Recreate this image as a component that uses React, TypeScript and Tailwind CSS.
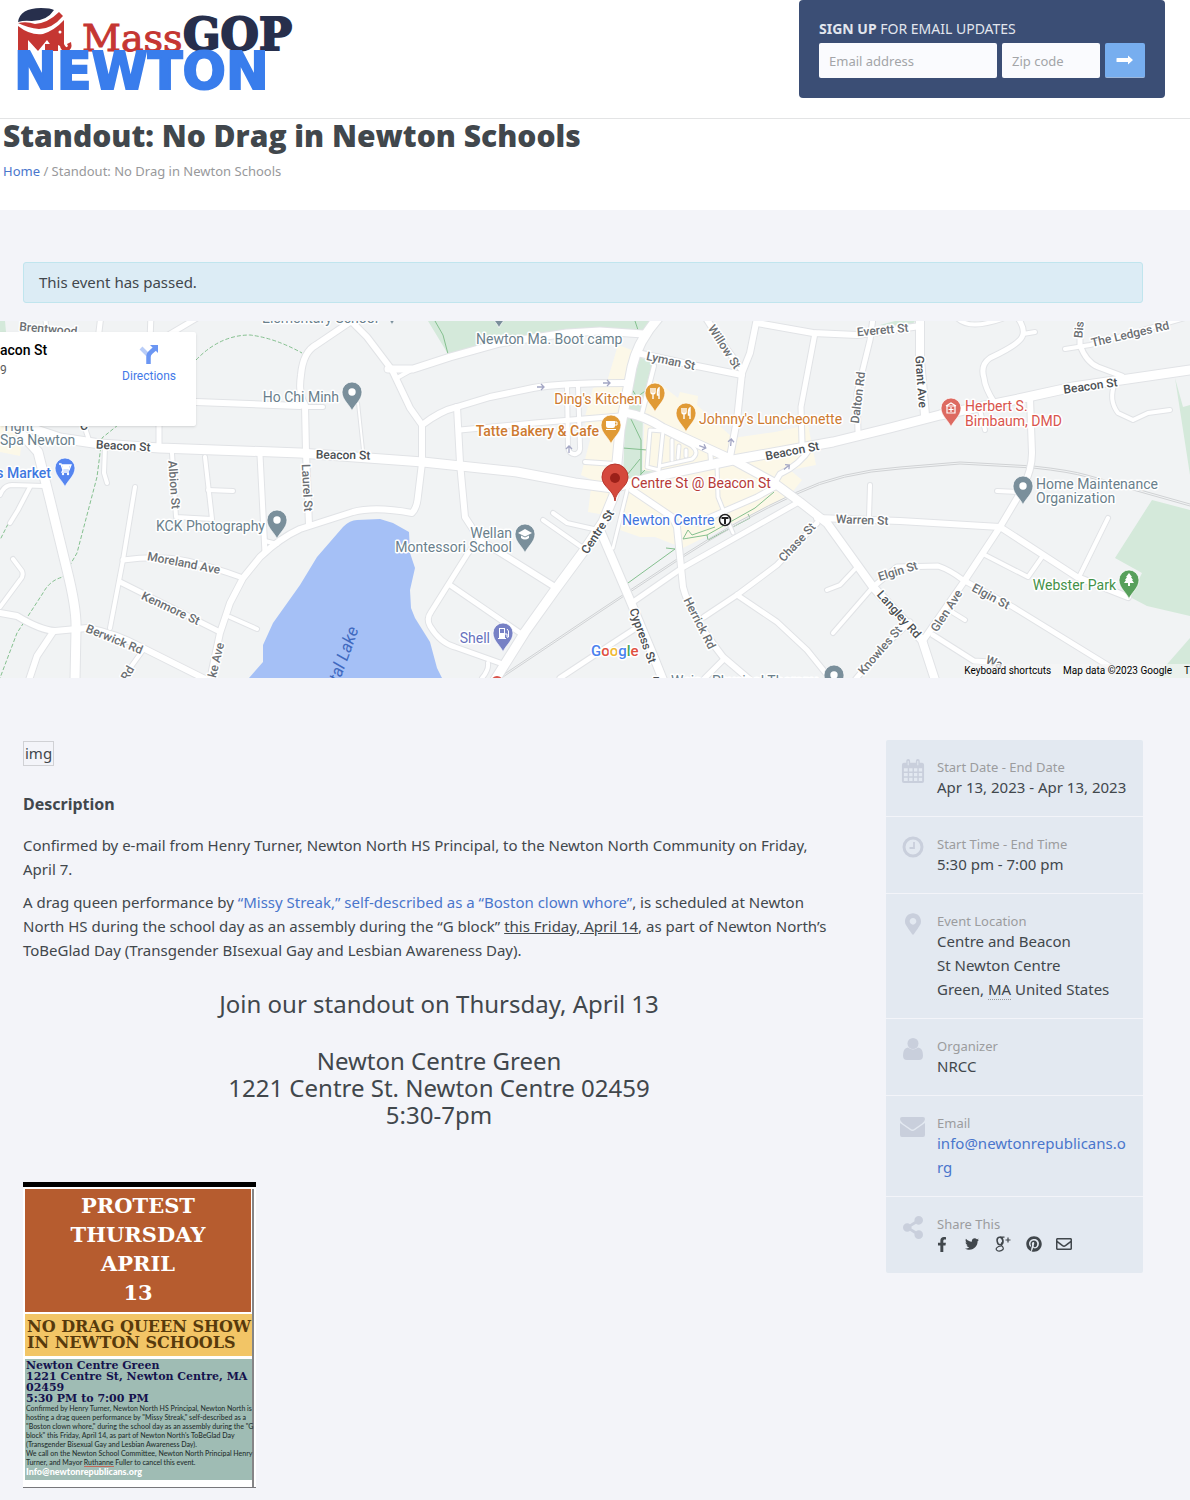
import React, { useState } from "react";
import {
  FaFacebookF,
  FaMapMarkerAlt,
  FaPinterest,
  FaRegEnvelope,
  FaShareAlt,
  FaTwitter,
} from "react-icons/fa";

/* ---------- Map data ---------- */

interface Road {
  d: string;
  w: number;
}

const roads: Road[] = [
  // minor streets
  { d: "M358 403L363 450", w: 2 },
  { d: "M628 487L613 548", w: 3 },
  { d: "M717 465L718 497L724 512L733 533", w: 3 },
  { d: "M0 495Q4 485 12 485L44 486", w: 4 },
  { d: "M30 487L18 510L10 523", w: 4 },
  { d: "M13 559L22 571Q24 576 20 580L0 607", w: 4 },
  { d: "M135 487L123 560L110 628", w: 4 },
  { d: "M123 560Q160 555 187 561Q210 566 243 578", w: 5 },
  { d: "M120 582L220 632", w: 5 },
  { d: "M105 447L104 473L107 483", w: 4 },
  { d: "M172 453L176 517L212 519L205 457", w: 4 },
  { d: "M208 490L233 491", w: 4 },
  { d: "M260 455L265 553", w: 5 },
  { d: "M265 541L277 544", w: 4 },
  { d: "M230 617L257 629", w: 4 },
  { d: "M143 650L123 678", w: 4 },
  { d: "M159 448L159 420", w: 5 },
  { d: "M84 425L89 440", w: 4 },
  { d: "M101 315L98 340", w: 5 },
  { d: "M151 315L150 340", w: 5 },
  { d: "M197 318L165 337", w: 5 },
  { d: "M45 315L46 325", w: 4 },
  { d: "M305 407L323 407", w: 4 },
  { d: "M397 378L413 369", w: 4 },
  { d: "M460 430L535 423L620 416", w: 5 },
  { d: "M567 385L568 448Q570 455 576 454Q581 452 580 446L578 387", w: 4 },
  { d: "M585 462L615 464", w: 4 },
  { d: "M543 520L583 548", w: 4 },
  { d: "M553 513L567 523L598 530", w: 4 },
  { d: "M480 540L468 553L431 612Q426 619 430 626Q440 643 455 647L500 663", w: 5 },
  { d: "M450 585L520 633", w: 5 },
  { d: "M488 663Q489 670 482 678", w: 4 },
  { d: "M633 602L682 568L797 503", w: 5 },
  { d: "M560 678L610 645L633 630", w: 5 },
  { d: "M704 617L737 595L777 565L817 523", w: 5 },
  { d: "M723 660L705 678", w: 5 },
  { d: "M737 595L777 622L807 650L828 676", w: 5 },
  { d: "M654 366L641 417", w: 4 },
  { d: "M873 318L870 340L857 393L858 432", w: 5 },
  { d: "M815 333L801 407L802 443", w: 5 },
  { d: "M811 447Q800 465 780 474L774 484", w: 5 },
  { d: "M775 487L757 497L697 523", w: 5 },
  { d: "M870 485L869 518", w: 4 },
  { d: "M857 567L840 585L827 590", w: 4 },
  { d: "M872 588L833 633", w: 4 },
  { d: "M873 587L897 567L938 566Q950 570 963 580L1013 607L1112 668", w: 5 },
  { d: "M910 622L880 650L855 680", w: 5 },
  { d: "M997 491L1020 492", w: 4 },
  { d: "M985 555L1028 577L1042 557", w: 4 },
  { d: "M1108 518L1080 575", w: 4 },
  { d: "M952 612L965 620", w: 4 },
  { d: "M933 635L974 661L990 662", w: 5 },
  { d: "M1018 318Q1026 330 1022 337Q1018 345 990 358Q980 365 984 378Q985 388 994 402", w: 5 },
  { d: "M1023 334L1035 332", w: 4 },
  { d: "M958 319Q970 330 1002 319", w: 4 },
  { d: "M980 410L985 430", w: 4 },
  { d: "M1080 316L1080 345Q1086 362 1098 367L1122 376", w: 5 },
  { d: "M1065 349L1090 345L1185 318", w: 4 },
  { d: "M1115 383Q1108 400 1118 413L1133 420L1148 413L1170 410", w: 4 },
  // parking lot by the green
  { d: "M663 431L650 430L647 467L659 470L663 431", w: 3 },
  { d: "M663 431L692 446Q700 453 692 459L660 466", w: 3 },
  { d: "M672 440L672 460M679 446L678 458M686 450L686 456", w: 3 },
  { d: "M710 448L711 462", w: 4 },
  // collectors
  { d: "M196 402L300 406", w: 6 },
  { d: "M0 613L17 616Q40 630 55 631L87 628Q115 633 143 648L205 679", w: 6 },
  { d: "M53 632L37 656L29 680", w: 6 },
  { d: "M210 680L220 633L230 603L243 578L260 557Q280 538 300 529L353 512Q375 506 412 513Q417 508 418 496L422 463", w: 6 },
  { d: "M353 320L316 345Q303 352 301 375Q298 395 305 405L306 453L309 525", w: 6 },
  { d: "M350 320L367 337L392 370L410 408L422 425L422 463", w: 6 },
  { d: "M388 369L413 369L450 357L500 343L567 333L600 331L643 334", w: 7 },
  { d: "M422 425Q440 411 457 407L490 397L533 388Q560 383 625 383", w: 6 },
  { d: "M457 407L460 463L465 517L480 540L555 587", w: 6 },
  { d: "M632 490L672 517L677 527L683 587Q690 615 723 657L750 680", w: 6 },
  { d: "M637 353L697 366L742 375", w: 6 },
  { d: "M706 318L720 340L742 370", w: 6 },
  { d: "M757 318L750 353L742 373L737 420L730 457", w: 6 },
  { d: "M757 323L813 333L857 335L920 326", w: 6 },
  { d: "M817 518L900 521L1000 527L1077 577L1128 597", w: 6 },
  { d: "M1030 398L1032 453Q1032 470 1022 490L1000 527L963 583L922 642", w: 6 },
  { d: "M920 318L920 360L925 415", w: 8 },
  // arterials
  { d: "M20 432L38 452L50 500L67 570Q77 610 76 630L75 680", w: 9 },
  { d: "M30 428L60 438L100 444L160 448L300 453L423 462L517 472L575 483L613 488L657 476L733 460L833 442L890 428L940 415L1023 398L1073 387L1190 370", w: 9 },
  { d: "M660 316Q638 340 632 367L620 430L614 495L603 522L583 552L555 590L525 632L495 680", w: 9 },
  { d: "M600 530L630 600L655 660L663 680", w: 8 },
  { d: "M627 413Q645 416 663 428L733 460L773 482L800 502L827 523L873 587L922 640L935 680", w: 8 },
];

interface MapLabel {
  text: string;
  x: number;
  y: number;
  r?: number;
  color?: string;
  weight?: number;
  anchor?: "start" | "middle" | "end";
}

const STREET = "#6b6f73";
const MAIN = "#4b4f53";
const POI = "#6a7f8c";
const FOOD = "#cd7a30";

const streetLabels: MapLabel[] = [
  { text: "Brentwood", x: 48, y: 333, r: 5 },
  { text: "Beacon St", x: 123, y: 450, r: 3, color: MAIN, weight: 500 },
  { text: "Beacon St", x: 343, y: 459, r: 1, color: MAIN, weight: 500 },
  { text: "Beacon St", x: 793, y: 455, r: -11, color: MAIN, weight: 500 },
  { text: "Beacon St", x: 1091, y: 390, r: -8, color: MAIN, weight: 500 },
  { text: "Albion St", x: 170, y: 485, r: 86 },
  { text: "Laurel St", x: 303, y: 488, r: 87 },
  { text: "Moreland Ave", x: 183, y: 567, r: 11 },
  { text: "Kenmore St", x: 169, y: 612, r: 25 },
  { text: "Berwick Rd", x: 113, y: 643, r: 22 },
  { text: "Rd", x: 131, y: 675, r: -60 },
  { text: "ke Ave", x: 220, y: 661, r: -76 },
  { text: "Willow St", x: 721, y: 349, r: 57 },
  { text: "Lyman St", x: 670, y: 365, r: 12 },
  { text: "Everett St", x: 883, y: 334, r: -5 },
  { text: "Dalton Rd", x: 862, y: 398, r: -83 },
  { text: "Grant Ave", x: 917, y: 382, r: 86, color: MAIN },
  { text: "Bis", x: 1083, y: 330, r: -85 },
  { text: "The Ledges Rd", x: 1131, y: 338, r: -13 },
  { text: "Warren St", x: 862, y: 524, r: 2 },
  { text: "Centre St", x: 601, y: 534, r: -57, color: MAIN, weight: 500 },
  { text: "Chase St", x: 800, y: 545, r: -47 },
  { text: "Elgin St", x: 899, y: 575, r: -17 },
  { text: "Elgin St", x: 989, y: 600, r: 28 },
  { text: "Glen Ave", x: 950, y: 613, r: -57 },
  { text: "Langley Rd", x: 896, y: 617, r: 48, color: MAIN, weight: 500 },
  { text: "Knowles St", x: 883, y: 653, r: -49 },
  { text: "Herrick Rd", x: 696, y: 625, r: 63 },
  { text: "Cypress St", x: 639, y: 637, r: 70, color: MAIN, weight: 500 },
  { text: "Wa", x: 993, y: 666, r: 20 },
  { text: "E", x: 656, y: 686, color: MAIN, weight: 500 },
  { text: "C", x: 84, y: 430, color: MAIN },
];

const placeLabels: MapLabel[] = [
  { text: "Elementary School", x: 262, y: 323, color: POI },
  { text: "Newton Ma. Boot camp", x: 476, y: 344, color: POI },
  { text: "Ho Chi Minh", x: 339, y: 402, color: POI, anchor: "end" },
  { text: "Tight", x: 2, y: 431, color: POI },
  { text: "Spa Newton", x: 0, y: 445, color: POI },
  { text: "s Market", x: 51, y: 478, color: "#3f78e0", weight: 500, anchor: "end" },
  { text: "KCK Photography", x: 265, y: 531, color: POI, anchor: "end" },
  { text: "Wellan", x: 512, y: 538, color: POI, anchor: "end" },
  { text: "Montessori School", x: 512, y: 552, color: POI, anchor: "end" },
  { text: "Shell", x: 490, y: 643, color: "#6672bd", anchor: "end" },
  { text: "Ding's Kitchen", x: 642, y: 404, color: FOOD, anchor: "end" },
  { text: "Tatte Bakery & Cafe", x: 599, y: 436, color: FOOD, weight: 500, anchor: "end" },
  { text: "Johnny's Luncheonette", x: 699, y: 424, color: FOOD },
  { text: "Centre St @ Beacon St", x: 631, y: 488, color: "#b63a38" },
  { text: "Newton Centre", x: 622, y: 525, color: "#3f74dc" },
  { text: "Herbert S.", x: 965, y: 411, color: "#d9544c" },
  { text: "Birnbaum, DMD", x: 965, y: 426, color: "#d9544c" },
  { text: "Home Maintenance", x: 1036, y: 489, color: POI },
  { text: "Organization", x: 1036, y: 503, color: POI },
  { text: "Webster Park", x: 1116, y: 590, color: "#439148", anchor: "end" },
  { text: "Weiss Physical Therapy", x: 671, y: 686, color: POI },
];

const MapText = ({ label, size }: { label: MapLabel; size: number }) => (
  <text
    x={label.x}
    y={label.y}
    fontSize={size}
    fontWeight={label.weight ?? 400}
    textAnchor={label.anchor ?? "start"}
    fill={label.color ?? STREET}
    stroke="#fff"
    strokeWidth={3}
    strokeLinejoin="round"
    paintOrder="stroke"
    transform={label.r ? `rotate(${label.r} ${label.x} ${label.y})` : undefined}
  >
    {label.text}
  </text>
);

// Pin whose tip sits at x, y
const Pin = ({
  x,
  y,
  color,
  children,
}: {
  x: number;
  y: number;
  color: string;
  children?: React.ReactNode;
}) => (
  <g transform={`translate(${x} ${y})`}>
    <path
      d="M0 0C-2 -6 -10 -11 -10 -19A10 10 0 0 1 10 -19C10 -11 2 -6 0 0Z"
      fill={color}
      stroke="#fff"
      strokeWidth={1}
      strokeOpacity={0.7}
    />
    {children ?? <circle cx={0} cy={-19} r={3.7} fill="#fff" />}
  </g>
);

const Fork = () => (
  <path
    d="M-4 -24V-20Q-4 -18 -2 -18V-13M-2 -24V-18M0 -24V-20Q0 -18 -2 -18M4 -13V-24Q2 -23 2.500 -17H4"
    fill="none"
    stroke="#fff"
    strokeWidth={1.4}
  />
);

const OneWay = ({ x, y, r }: { x: number; y: number; r: number }) => (
  <path
    d="M-4 0H3M0 -3L3 0L0 3"
    transform={`translate(${x} ${y}) rotate(${r})`}
    fill="none"
    stroke="#a3a6c4"
    strokeWidth={1.3}
  />
);

const rail =
  "M503 677L600 612L680 559Q740 520 797 494Q840 473 900 469L960 464L1033 468Q1070 472 1087 477L1190 506";

const EventMap = () => (
  <section aria-label="Event map" className="relative h-[357px] overflow-hidden bg-[#f1f3f4]">
    <svg
      viewBox="0 321 1190 357"
      preserveAspectRatio="xMidYMid slice"
      className="block h-full w-full"
      fontFamily="Roboto, sans-serif"
    >
      <rect x="0" y="321" width="1190" height="357" fill="#f1f3f4" />

      {/* Business district */}
      <g fill="#fcf8e8">
        <path d="M618 345L637 352L628 400L618 470L605 515L588 512L592 480L581 475L590 440L584 420L593 388L606 385Z" />
        <path d="M655 380L678 398L680 392L698 396L697 405L733 438L775 432L808 425L816 465L790 470L802 480L790 495L683 548L655 537L640 537L620 530L628 485L643 470L645 400Z" />
        <path d="M0 425H46L22 438L20 456L0 452Z" />
      </g>

      {/* Parks */}
      <g fill="#d4e9da">
        <path d="M428 321L448 354L500 340L600 329L640 332L654 321Z" />
        <path d="M640 357L652 363L643 410L642 470L656 472L623 482L625 420L632 387Z" />
        <path d="M1152 500L1115 558L1142 573L1130 597L1147 606L1190 616V510Z" />
        <path d="M1175 378L1183 407L1190 405V475Z" />
        <path d="M1190 638L1155 678H1190Z" />
        <path d="M0 321H5L6 332H0ZM895 321H915L912 325H880Z" />
      </g>

      {/* Crystal Lake */}
      <path
        d="M249 678L263 662V645L273 623L300 585L317 557L343 527Q350 520 357 520L380 519L393 523L409 532L410 553L415 568L410 590L411 608L415 618L430 642L437 668L442 678Z"
        fill="#a5c0f6"
      />

      {/* Trails */}
      <g fill="none" stroke="#85c08f">
        <path
          d="M196 360Q220 335 250 335Q275 338 302 353M118 425L102 438L97 477L77 553L63 577Q50 580 43 593L17 633L0 678M8 524L0 540"
          strokeDasharray="4 2"
        />
        <path d="M435 321L443 335L448 354M635 321L638 330" />
        <path d="M631 388L637 397L652 386M630 417L641 440L641 475M623 448L647 450M627 475L640 459M640 475L645 470" />
        <path d="M628 583L675 549L666 548M683 539L688 530L692 535L715 527M683 539L707 535L755 508L774 492M707 535L708 540L750 518L748 514" />
      </g>

      <g fill="none" stroke="#d0d2d4">
        <path d={rail} />
        <path d={rail} transform="translate(0 -2)" />
      </g>

      {/* Streets: casing first, then the surface */}
      <g fill="none" strokeLinecap="round" strokeLinejoin="round">
        {roads.map((road) => (
          <path key={road.d} d={road.d} stroke="#e1e3e6" strokeWidth={road.w + 2} />
        ))}
        {roads.map((road) => (
          <path key={road.d} d={road.d} stroke="#fff" strokeWidth={road.w} />
        ))}
      </g>

      <OneWay x={541} y={387} r={0} />
      <OneWay x={607} y={383} r={0} />
      <OneWay x={569} y={449} r={-90} />
      <OneWay x={703} y={447} r={20} />
      <OneWay x={731} y={442} r={-85} />
      <OneWay x={787} y={467} r={-40} />

      {streetLabels.map((label) => (
        <MapText
          key={label.text + label.x}
          label={{ weight: 500, ...label, anchor: "middle" }}
          size={12}
        />
      ))}

      <Pin x={352} y={411} color="#7a8f9b" />
      <Pin x={277} y={539} color="#7a8f9b" />
      <Pin x={1023} y={505} color="#7a8f9b" />
      <Pin x={834} y={694} color="#7a8f9b" />
      <Pin x={499} y={328} color="#7a8f9b" />
      <Pin x={392} y={325} color="#7a8f9b" />
      <Pin x={525} y={553} color="#7a8f9b">
        <path d="M-7 -20L0 -24L7 -20L0 -16.500ZM-4 -17.500V-15Q0 -12 4 -15V-17.500L0 -15.500Z" fill="#fff" />
      </Pin>
      <Pin x={65} y={487} color="#5585f0">
        <path d="M-6 -23H-4L-2 -17H4L6 -22H-3M-2 -17L-3 -15H4" fill="none" stroke="#fff" strokeWidth={1.3} />
        <path d="M-3 -22H5L4 -18H-2Z" fill="#fff" />
        <circle cx={-2} cy={-13} r={1.2} fill="#fff" />
        <circle cx={3} cy={-13} r={1.2} fill="#fff" />
      </Pin>
      <Pin x={655} y={412} color="#e09a35">
        <Fork />
      </Pin>
      <Pin x={686} y={432} color="#e09a35">
        <Fork />
      </Pin>
      <Pin x={611} y={444} color="#e09a35">
        <path d="M-5 -23H4V-18Q4 -16 2 -16H-3Q-5 -16 -5 -18ZM-5 -15H5V-14H-5Z" fill="#fff" />
        <path d="M4 -22H6V-19H4" fill="none" stroke="#fff" />
      </Pin>
      <Pin x={951} y={427} color="#dd6a61">
        <path d="M-5 -21L0 -24L5 -21M-4 -21V-14H4V-21ZM0 -20V-15M-2.500 -17.500H2.500" fill="none" stroke="#fff" strokeWidth={1.2} />
      </Pin>
      <Pin x={503} y={652} color="#7781c5">
        <path d="M-4 -24H2V-13H-4ZM-5 -14H3V-13H-5Z" fill="#fff" />
        <path d="M-3 -23H1V-19H-3Z" fill="#7781c5" />
        <path d="M2 -18H4V-15Q5 -14 5.500 -15V-21L4 -23" fill="none" stroke="#fff" />
      </Pin>
      <Pin x={1129} y={599} color="#57a05b">
        <path d="M0 -26L3 -22H2L4 -19H3L5 -16H1V-13H-1V-16H-5L-3 -19H-4L-2 -22H-3Z" fill="#fff" />
      </Pin>
      <circle cx={497} cy={682} r={6} fill="#d9534a" />

      {/* Selected place */}
      <g transform="translate(615 501)">
        <path
          d="M0 0C-1 -11 -13 -14 -13 -24A13 13 0 0 1 13 -24C13 -14 1 -11 0 0Z"
          fill="#d5493c"
          stroke="#b8352c"
        />
        <circle cx={0} cy={-23} r={5} fill="#9c2019" />
      </g>

      {placeLabels.map((label) => (
        <MapText key={label.text} label={label} size={14} />
      ))}
      <text
        x={349}
        y={656}
        fontSize={17}
        fontStyle="italic"
        fill="#4069bf"
        textAnchor="middle"
        transform="rotate(-70 349 656)"
      >
        tal Lake
      </text>

      <g transform="translate(725 520)" fill="none" stroke="#222">
        <circle r={5.5} fill="#fff" strokeWidth={1.5} />
        <path d="M-3.500 -2H3.500M0 -2V4" strokeWidth={2} />
      </g>

      <text x={591} y={656} fontSize={15} fontWeight={500} stroke="#fff" strokeWidth={3} paintOrder="stroke">
        <tspan fill="#4a82ee">G</tspan>
        <tspan fill="#e0503f">o</tspan>
        <tspan fill="#f0b932">o</tspan>
        <tspan fill="#4a82ee">g</tspan>
        <tspan fill="#43a558">l</tspan>
        <tspan fill="#e0503f">e</tspan>
      </text>
    </svg>

    {/* Place card, partly scrolled off to the left */}
    <div className="absolute left-0 top-[11px] flex h-[94px] w-[196px] justify-between rounded-r-xs bg-white pr-5 pt-2 font-[Roboto] shadow">
      <div>
        <p className="text-sm font-medium leading-5 text-black">acon St</p>
        <p className="text-xs leading-5 text-[#5b5b5b]">9</p>
      </div>
      <a href="#directions" className="flex flex-col items-center gap-1 pt-1 text-xs text-[#4379e8]">
        <svg viewBox="0 0 20 20" className="h-5 w-5" fill="none">
          <path d="M2 4L9 11" stroke="#b9cdf8" strokeWidth="4" />
          <path d="M9.500 20V13Q9.500 10 12 8L16 4.500" stroke="#6b96f3" strokeWidth="4.500" />
          <path d="M11 1H19V9Z" fill="#6b96f3" />
        </svg>
        Directions
      </a>
    </div>

    <div className="absolute bottom-0 right-0 flex h-[14px] items-center gap-3 bg-[#f5f5f5]/70 font-[Roboto] text-[10px] leading-[14px] text-black">
      <button type="button">Keyboard shortcuts</button>
      <span>Map data ©2023 Google</span>
      <a href="#terms">T</a>
    </div>
  </section>
);

/* ---------- Header ---------- */

const Logo = () => (
  <svg viewBox="-6 0 290 86" className="h-[86px] w-[290px]" role="img" aria-label="MassGOP Newton">
    <path d="M1 14Q3 0 24 0Q34 0 37 2Q30 13 15 13Q7 12 1 14Z" fill="#272f4c" />
    <path d="M1 15Q10 13 18 16Q31 15 42 4L46 8Q35 21 22 21Q11 20 1 15Z" fill="#c53632" />
    <path d="M1 18Q14 28 26 26Q38 22 47 12V36Q49 41 51 38L50 36L54 34Q56 42 50 43Q44 44 43 38L41 37V43H38L30 32L21 43L11 32V43H1Z" fill="#c53632" />
    <path d="M28 43V36H38V43Z" fill="#c53632" />
    <circle cx="43" cy="24" r="1.500" fill="#fff" />
    <text x="65" y="43" fontFamily="DejaVu Serif, serif" fontSize="38" fill="#c53632" stroke="#c53632">
      Mass
    </text>
    <text x="166" y="42" fontFamily="DejaVu Serif, serif" fontWeight="700" fontSize="44" fill="#272f4c" stroke="#272f4c" strokeWidth="2">
      GOP
    </text>
    <text x="-3" y="81" fontFamily="DejaVu Sans, sans-serif" fontWeight="700" fontSize="51" fill="#397dec" stroke="#397dec" strokeWidth="2">
      NEWTON
    </text>
  </svg>
);

const Header = () => {
  const [email, setEmail] = useState("");
  const [zip, setZip] = useState("");

  return (
    <header className="flex items-start justify-between border-b border-[#e3e4e5] bg-white pb-5 pl-[11px] pr-[25px]">
      <a href="#home" className="pt-2">
        <Logo />
      </a>
      <form
        onSubmit={(e) => e.preventDefault()}
        className="h-[98px] rounded bg-[#3b4e75] px-5 pt-[18px]"
      >
        <p className="mb-1 text-sm leading-[21px] text-[#e2e6ee]">
          <strong>SIGN UP</strong> FOR EMAIL UPDATES
        </p>
        <div className="flex gap-[5px]">
          <input
            type="email"
            aria-label="Email address"
            placeholder="Email address"
            value={email}
            onChange={(e) => setEmail(e.target.value)}
            className="h-[35px] w-[178px] rounded-xs bg-[#fafbfe] px-[10px] text-[13px] text-[#41474c] placeholder:text-[#a3a5a8]"
          />
          <input
            type="text"
            aria-label="Zip code"
            placeholder="Zip code"
            value={zip}
            onChange={(e) => setZip(e.target.value)}
            className="h-[35px] w-[98px] rounded-xs bg-[#fafbfe] px-[10px] text-[13px] text-[#41474c] placeholder:text-[#a3a5a8]"
          />
          <button
            type="submit"
            aria-label="Sign up"
            className="flex h-[35px] w-10 items-center justify-center rounded-xs border-b border-[#9db7da] bg-[#77aeef] text-white"
          >
            <svg viewBox="0 0 18 10" className="h-[10px] w-[18px]" fill="currentColor">
              <path d="M1 3H12V0.500L17 5L12 9.500V7H1Q0.500 7 0.500 6.500V3.500Q0.500 3 1 3Z" />
            </svg>
          </button>
        </div>
      </form>
    </header>
  );
};

/* ---------- Sidebar ---------- */

const CalendarIcon = () => (
  <svg viewBox="0 0 24 26" className="h-[25px] w-6">
    <path
      fillRule="evenodd"
      fill="currentColor"
      d="M3 4H5V2Q5 0 7 0Q9 0 9 2V4H15V2Q15 0 17 0Q19 0 19 2V4H21Q23.500 4 23.500 6V23Q23.500 25 21.500 25H2.500Q0.500 25 0.500 23V6Q0.500 4 3 4ZM2.500 9.500V13H6.500V9.500ZM8 9.500V13H11.500V9.500ZM13 9.500V13H16.500V9.500ZM18 9.500V13H21.500V9.500ZM2.500 14.500V18H6.500V14.500ZM8 14.500V18H11.500V14.500ZM13 14.500V18H16.500V14.500ZM18 14.500V18H21.500V14.500ZM2.500 19.500V23H6.500V19.500ZM8 19.500V23H11.500V19.500ZM13 19.500V23H16.500V19.500ZM18 19.500V23H21.500V19.500ZM6.500 2V6.500H7.500V2ZM16.500 2V6.500H17.500V2Z"
    />
  </svg>
);

const ClockIcon = () => (
  <svg viewBox="0 0 22 22" className="h-[22px] w-[22px]" fill="none" stroke="currentColor">
    <circle cx="11" cy="11" r="9" strokeWidth="3" />
    <path d="M12 6V12H7.500" strokeWidth="1.800" />
  </svg>
);

const UserIcon = () => (
  <svg viewBox="0 0 20 22" className="h-[22px] w-5" fill="currentColor">
    <circle cx="10" cy="5.500" r="5.500" />
    <path d="M5 9.500Q0 10 0 17.500Q0 22 4 22H16Q20 22 20 17.500Q20 10 15 9.500Q10 13.500 5 9.500Z" />
  </svg>
);

const MailIcon = () => (
  <svg viewBox="0 0 25 22" className="h-[22px] w-[25px]" fill="currentColor">
    <path d="M2 2H23Q25 2 25 4Q25 6.500 22 8.500L14 14Q12.500 15 11 14L3 8.500Q0 6.500 0 4Q0 2 2 2Z" />
    <path d="M0 8L10 15Q12.500 17 15 15L25 8V20Q25 22 23 22H2Q0 22 0 20Z" />
  </svg>
);

const GooglePlusIcon = () => (
  <svg viewBox="0 0 16 16" className="h-4 w-4" fill="none" stroke="currentColor">
    <ellipse cx="5" cy="5" rx="2.800" ry="3.800" strokeWidth="1.600" transform="rotate(-12 5 5)" />
    <path d="M5 1.200H9.500M6.500 1.200Q8.500 3 7.500 6Q5.500 8 6.500 9.500Q9 11.500 8 13.500Q6 15.500 3 15Q0.500 14 1.500 12Q3 10 6.500 10" strokeWidth="1.200" />
    <path d="M10.500 4H15.500M13 1.500V6.500" strokeWidth="1.200" />
  </svg>
);

const SideItem = ({
  icon,
  label,
  children,
}: {
  icon: React.ReactNode;
  label: string;
  children: React.ReactNode;
}) => (
  <li className="flex border-b border-[#f3f4f9] pb-[17px] pr-3 pt-[19px] last:border-b-0">
    <div className="flex w-[51px] shrink-0 justify-center pl-[2px] text-[#c9cfdc]">
      <span>{icon}</span>
    </div>
    <div className="min-w-0 flex-1">
      <h3 className="text-[13px] leading-4 text-[#9b9c9e]">{label}</h3>
      <div className="text-[15px] leading-6">{children}</div>
    </div>
  </li>
);

const Sidebar = () => (
  <aside className="w-[257px] shrink-0 self-start">
    <ul className="rounded-xs bg-[#e3e9f1]">
      <SideItem icon={<CalendarIcon />} label="Start Date - End Date">
        Apr 13, 2023 - Apr 13, 2023
      </SideItem>
      <SideItem icon={<ClockIcon />} label="Start Time - End Time">
        5:30 pm - 7:00 pm
      </SideItem>
      <SideItem icon={<FaMapMarkerAlt className="h-[22px] w-4" />} label="Event Location">
        Centre and Beacon
        <br />
        St Newton Centre
        <br />
        Green,{" "}
        <abbr title="Massachusetts" className="border-b border-dotted border-[#9b9c9e] no-underline">
          MA
        </abbr>{" "}
        United States
      </SideItem>
      <SideItem icon={<UserIcon />} label="Organizer">
        NRCC
      </SideItem>
      <SideItem icon={<MailIcon />} label="Email">
        <a href="mailto:info@newtonrepublicans.org" className="break-all text-[#4a76cc]">
          info@newtonrepublicans.org
        </a>
      </SideItem>
      <SideItem icon={<FaShareAlt className="h-[23px] w-5" />} label="Share This">
        <div className="flex h-6 items-center">
          <a href="#facebook" aria-label="Facebook" className="w-[28px]">
            <FaFacebookF className="h-[15px] w-[10px]" />
          </a>
          <a href="#twitter" aria-label="Twitter" className="w-[30px]">
            <FaTwitter className="h-[14px] w-[14px]" />
          </a>
          <a href="#google" aria-label="Google Plus" className="w-[31px]">
            <GooglePlusIcon />
          </a>
          <a href="#pinterest" aria-label="Pinterest" className="w-[30px]">
            <FaPinterest className="h-4 w-4" />
          </a>
          <a href="#email" aria-label="Share by email">
            <FaRegEnvelope className="h-4 w-4" />
          </a>
        </div>
      </SideItem>
    </ul>
  </aside>
);

/* ---------- Flyer ---------- */

const flyerText = [
  "Confirmed by Henry Turner, Newton North HS Principal, Newton North is",
  "hosting a drag queen performance by \"Missy Streak,\" self-described as a",
  "\"Boston clown whore,\" during the school day as an assembly during the \"G",
  "block\" this Friday, April 14, as part of Newton North's ToBeGlad Day",
  "(Transgender Bisexual Gay and Lesbian Awareness Day).",
  "We call on the Newton School Committee, Newton North Principal Henry",
];

const Flyer = () => (
  <figure className="w-[233px] whitespace-nowrap border-b border-t-[5px] border-b-[#77777b] border-t-black bg-white pl-[2px] pr-[2px] pt-[2px] font-['DejaVu_Serif']">
    <div className="border-r-2 border-[#858587]">
      <div className="mb-[2px] mr-px h-[123px] bg-[#b65c2f] pt-[2px] text-center text-[21px] font-bold leading-[29px] text-white">
        <p>PROTEST</p>
        <p>THURSDAY</p>
        <p>APRIL</p>
        <p>13</p>
      </div>
      <div className="mb-[3px] h-[42px] bg-[#f2c566] pl-[2px] pt-[5px] text-base font-bold leading-4 text-[#573a0c]">
        <p>NO DRAG QUEEN SHOW</p>
        <p>IN NEWTON SCHOOLS</p>
      </div>
      <div className="h-[121px] bg-[#9fbcb4] pl-px pt-px">
        <div className="text-[11px] font-bold leading-[11px] text-[#14124d]">
          <p>Newton Centre Green</p>
          <p>1221 Centre St, Newton Centre, MA</p>
          <p>02459</p>
          <p>5:30 PM to 7:00 PM</p>
        </div>
        <div className="font-[Lato] text-[7px] font-medium leading-[9px] text-[#25302e]">
          {flyerText.map((line) => (
            <p key={line}>{line}</p>
          ))}
          <p>
            Turner, and Mayor <span className="border-b border-[#c2695c]">Ruthanne</span> Fuller to cancel this event.
          </p>
        </div>
        <p className="font-[Lato] text-[9px] font-black leading-[9px] text-white">
          Info@newtonrepublicans.org
        </p>
      </div>
      <div className="h-[7px]" />
    </div>
  </figure>
);

/* ---------- Page ---------- */

const App = () => {
  return (
    <div className="min-h-screen overflow-x-hidden bg-[#f3f4f9] font-['Noto_Sans',sans-serif] text-[#41474c]">
      <Header />

      <div className="h-[91px] bg-white px-[3px]">
        <h1 className="font-['Open_Sans'] text-3xl font-extrabold leading-[34px]">
          Standout: No Drag in Newton Schools
        </h1>
        <nav aria-label="Breadcrumb" className="pt-2 text-[13px] leading-5 text-[#98999b]">
          <a href="#home" className="text-[#4a76cc]">
            Home
          </a>{" "}
          / Standout: No Drag in Newton Schools
        </nav>
      </div>

      <div className="pb-[18px] pl-[23px] pr-[47px] pt-[52px]">
        <p
          role="status"
          className="rounded-[3px] border border-[#c0e5ee] bg-[#dcecf5] px-[15px] text-[15px] leading-[39px]"
        >
          This event has passed.
        </p>
      </div>

      <EventMap />

      <div className="flex gap-[31px] pb-3 pl-[23px] pr-[47px] pt-[62px]">
        <main className="min-w-0 flex-1">
          <div className="mt-px inline-block h-[25px] border border-[#d0d1d5] px-px text-[15px] leading-[23px]">
            img
          </div>

          <h2 className="mb-[17px] mt-[26px] text-base font-bold leading-6">Description</h2>
          <p className="mb-[9px] pr-4 text-[15px] leading-6">
            Confirmed by e-mail from Henry Turner, Newton North HS Principal, to the Newton North
            Community on Friday, April 7.
          </p>
          <p className="mb-7 pr-4 text-[15px] leading-6">
            A drag queen performance by{" "}
            <a href="#story" className="text-[#4a76cc]">
              “Missy Streak,” self-described as a “Boston clown whore”
            </a>
            , is scheduled at Newton North HS during the school day as an assembly during the “G
            block” <u>this Friday, April 14</u>, as part of Newton North’s ToBeGlad Day (Transgender
            BIsexual Gay and Lesbian Awareness Day).
          </p>

          <div className="mb-[54px] text-center text-2xl leading-[27px]">
            <p className="mb-[30px]">Join our standout on Thursday, April 13</p>
            <p>Newton Centre Green</p>
            <p>1221 Centre St. Newton Centre 02459</p>
            <p>5:30-7pm</p>
          </div>

          <Flyer />
        </main>

        <Sidebar />
      </div>
    </div>
  );
};

export default App;
